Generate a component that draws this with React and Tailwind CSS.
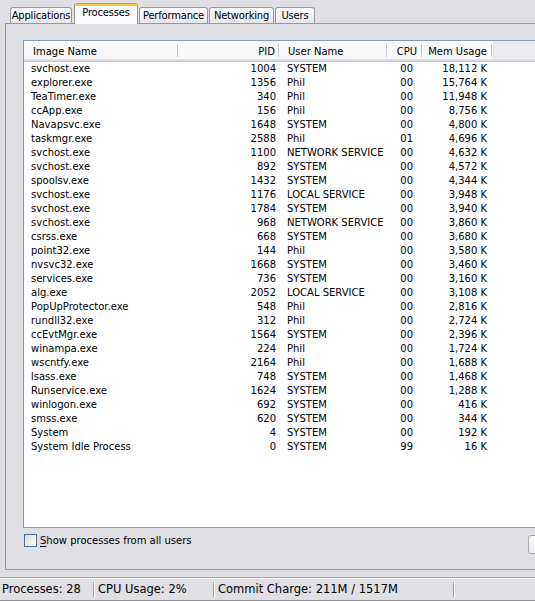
import React from "react";

const rows = [
  ["svchost.exe", "1004", "SYSTEM", "00", "18,112 K"],
  ["explorer.exe", "1356", "Phil", "00", "15,764 K"],
  ["TeaTimer.exe", "340", "Phil", "00", "11,948 K"],
  ["ccApp.exe", "156", "Phil", "00", "8,756 K"],
  ["Navapsvc.exe", "1648", "SYSTEM", "00", "4,800 K"],
  ["taskmgr.exe", "2588", "Phil", "01", "4,696 K"],
  ["svchost.exe", "1100", "NETWORK SERVICE", "00", "4,632 K"],
  ["svchost.exe", "892", "SYSTEM", "00", "4,572 K"],
  ["spoolsv.exe", "1432", "SYSTEM", "00", "4,344 K"],
  ["svchost.exe", "1176", "LOCAL SERVICE", "00", "3,948 K"],
  ["svchost.exe", "1784", "SYSTEM", "00", "3,940 K"],
  ["svchost.exe", "968", "NETWORK SERVICE", "00", "3,860 K"],
  ["csrss.exe", "668", "SYSTEM", "00", "3,680 K"],
  ["point32.exe", "144", "Phil", "00", "3,580 K"],
  ["nvsvc32.exe", "1668", "SYSTEM", "00", "3,460 K"],
  ["services.exe", "736", "SYSTEM", "00", "3,160 K"],
  ["alg.exe", "2052", "LOCAL SERVICE", "00", "3,108 K"],
  ["PopUpProtector.exe", "548", "Phil", "00", "2,816 K"],
  ["rundll32.exe", "312", "Phil", "00", "2,724 K"],
  ["ccEvtMgr.exe", "1564", "SYSTEM", "00", "2,396 K"],
  ["winampa.exe", "224", "Phil", "00", "1,724 K"],
  ["wscntfy.exe", "2164", "Phil", "00", "1,688 K"],
  ["lsass.exe", "748", "SYSTEM", "00", "1,468 K"],
  ["Runservice.exe", "1624", "SYSTEM", "00", "1,288 K"],
  ["winlogon.exe", "692", "SYSTEM", "00", "416 K"],
  ["smss.exe", "620", "SYSTEM", "00", "344 K"],
  ["System", "4", "SYSTEM", "00", "192 K"],
  ["System Idle Process", "0", "SYSTEM", "99", "16 K"],
];

function Tab({ label, className }) {
  return (
    <div
      className={
        "h-[16px] mb-[1px] flex items-center justify-center rounded-t-[3px] border border-b-0 border-[#919B9C] bg-gradient-to-b from-[#FFFFFF] to-[#E6E6EC] tracking-[-0.2px] " +
        className
      }
    >
      <span className="mt-[1px]">{label}</span>
    </div>
  );
}

function Sep() {
  return <div className="h-[13px] w-[2px] shrink-0 border-l border-[#C5C5CB] border-r border-r-white" />;
}

export default function App() {
  return (
    <div className="w-[535px] h-[601px] overflow-hidden bg-[#E0DFE3] text-black flex flex-col font-['DejaVu_Sans','Liberation_Sans',sans-serif] text-[10px] leading-none">
      {/* Tabs */}
      <div className="h-[24px] flex items-end shrink-0">
        <Tab label="Applications" className="ml-[10px] w-[62px]" />
        <div className="relative z-10 ml-[2px] w-[64px] h-[21px] rounded-t-[3px] border-x border-[#919B9C] bg-[#FCFCFE] flex flex-col tracking-[-0.2px]">
          <div className="h-[1px] mx-[1px] bg-[#E68B2C] rounded-t-[2px]" />
          <div className="h-[2px] bg-[#FFC73C]" />
          <div className="flex-1 flex items-center justify-center pb-[4px]">Processes</div>
        </div>
        <Tab label="Performance" className="ml-[1px] w-[69px]" />
        <Tab label="Networking" className="ml-[1px] w-[65px]" />
        <Tab label="Users" className="ml-[1px] w-[40px]" />
      </div>

      {/* Panel */}
      <div className="-mt-[1px] ml-[5px] w-[600px] h-[547px] shrink-0 border border-[#919B9C] pl-[17px] pt-[16px]">
        {/* List */}
        <div className="w-[600px] h-[488px] border border-[#7F9DB9] bg-white overflow-hidden">
          <div className="flex flex-col">
            <div className="h-[18px] flex">
              <div className="w-[155px] flex items-center bg-[#F9F9F9]">
                <span className="flex-1 pl-[9px] mt-[3px]">Image Name</span>
                <Sep />
              </div>
              <div className="w-[101px] flex items-center bg-[#F9F9F9]">
                <span className="flex-1 text-right pr-[3px] mt-[3px]">PID</span>
                <Sep />
              </div>
              <div className="w-[108px] flex items-center bg-[#F9F9F9]">
                <span className="flex-1 pl-[8px] mt-[3px]">User Name</span>
                <Sep />
              </div>
              <div className="w-[35px] flex items-center bg-[#F9F9F9]">
                <span className="flex-1 text-right pr-[4px] mt-[3px]">CPU</span>
                <Sep />
              </div>
              <div className="w-[70px] flex items-center bg-[#F9F9F9]">
                <span className="flex-1 text-right pr-[4px] mt-[3px]">Mem Usage</span>
                <Sep />
              </div>
              <div className="flex-1 bg-[#EBEBEE]" />
            </div>
            <div className="h-[1px] bg-[#E2E2E7]" />
            <div className="h-[1px] bg-[#D6D6DC]" />
            <div className="h-[1px] bg-[#C8C8D0]" />
          </div>
          <div className="flex flex-col">
            {rows.map((r, i) => (
              <div key={i} className="h-[14px] flex items-center whitespace-nowrap">
                <div className="w-[155px] pl-[7px]">{r[0]}</div>
                <div className="w-[101px] text-right pr-[4px]">{r[1]}</div>
                <div className="w-[108px] pl-[7px]">{r[2]}</div>
                <div className="w-[35px] text-right pr-[10px]">{r[3]}</div>
                <div className="w-[70px] text-right pr-[6px]">{r[4]}</div>
              </div>
            ))}
          </div>
        </div>

        {/* Checkbox row */}
        <div className="mt-[6px] flex items-start">
          <div className="w-[505px] flex items-center">
            <div className="ml-[1px] w-[13px] h-[13px] border border-[#4A6A91] bg-gradient-to-br from-[#DCDCD7] to-[#FFFFFF]" />
            <span className="ml-[3px] mt-[1px]">
              <span className="underline underline-offset-[2px]">S</span>how processes from all users
            </span>
          </div>
          <div className="mt-[1px] w-[75px] h-[19px] rounded-[3px] border border-[#A8A8AE] bg-gradient-to-b from-[#FBFBFB] to-[#EDEDEF]" />
        </div>
      </div>

      <div className="h-[1px] bg-[#D9D8C8] mt-[1px] shrink-0" />

      {/* Status bar */}
      <div className="mt-[5px] h-[24px] shrink-0 border-t border-[#A6A5AB] flex flex-col">
        <div className="h-[1px] bg-white" />
        <div className="flex-1 flex items-center text-[11.5px]">
          <div className="w-[93px] pl-[2px] mt-[1px]">Processes: 28</div>
          <div className="h-[15px] w-[2px] border-l border-[#A0A0A5] border-r border-r-white" />
          <div className="w-[118px] pl-[3px] mt-[1px]">CPU Usage: 2%</div>
          <div className="h-[15px] w-[2px] border-l border-[#A0A0A5] border-r border-r-white" />
          <div className="w-[238px] pl-[3px] mt-[1px]">Commit Charge: 211M / 1517M</div>
          <div className="h-[15px] w-[2px] border-l border-[#A0A0A5] border-r border-r-white" />
        </div>
        <div className="h-[1px] bg-[#8E8E94]" />
      </div>
    </div>
  );
}
